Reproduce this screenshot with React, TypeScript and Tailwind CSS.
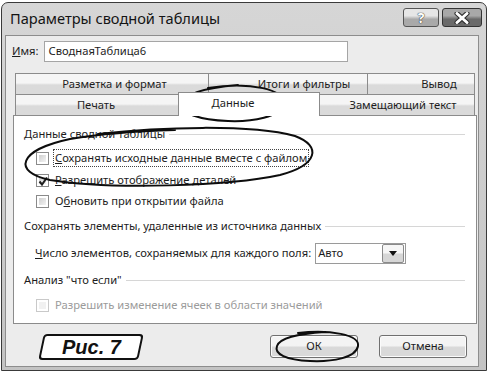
import React from "react";

const row1 = [
  { label: "Разметка и формат", w: "w-[193px]", pad: "pl-[5px]" },
  { label: "Итоги и фильтры", w: "w-[159px]", pad: "pl-[32px]" },
  { label: "Вывод", w: "w-[108px]", pad: "pl-[36px]" },
];

function Box({ checked, disabled }: { checked?: boolean; disabled?: boolean }) {
  return (
    <span
      className={`relative flex w-[13px] h-[13px] shrink-0 border p-[2px] bg-white ${
        disabled ? "border-[#c9c9c9]" : "border-[#8a8a8a]"
      }`}
    >
      <span
        className={`flex-1 ${
          disabled ? "bg-[#f1f1f1]" : "bg-linear-to-br from-[#cfcfcf] to-[#f3f3f3]"
        }`}
      />
      {checked && (
        <svg className="absolute left-0 top-0" width="13" height="13" viewBox="0 0 13 13">
          <path d="M2.5 6.5 L5 9.5 L10 2.5" fill="none" stroke="#1f1f1f" strokeWidth="2" />
        </svg>
      )}
    </span>
  );
}

function Section({ title, gap }: { title: string; gap: string }) {
  return (
    <div className={`flex items-center h-[16px] pr-[11px] ${gap}`}>
      <span className="whitespace-nowrap">{title}</span>
      <span className="flex-1 h-px bg-[#d6d6d6] ml-[4px]" />
    </div>
  );
}

function Check({
  children,
  checked,
  disabled,
  gap,
  focus,
}: {
  children: React.ReactNode;
  checked?: boolean;
  disabled?: boolean;
  gap: string;
  focus?: boolean;
}) {
  return (
    <div className={`flex items-center h-[16px] pl-[12px] gap-[4px] ${gap}`}>
      <Box checked={checked} disabled={disabled} />
      <span
        className={`whitespace-nowrap px-[1px] ${disabled ? "text-[#9b9b9b]" : ""} ${
          focus ? "border border-dotted border-[#444]" : "border border-transparent"
        }`}
      >
        {children}
      </span>
    </div>
  );
}

function Button({ children }: { children: React.ReactNode }) {
  return (
    <div className="w-[88px] h-[23px] rounded-[3px] border border-[#707070] bg-linear-to-b from-[#f4f4f4] from-45% to-[#d9d9d9] to-55% flex items-center justify-center shadow-[inset_0_0_0_1px_#fbfbfb]">
      {children}
    </div>
  );
}

export default function App() {
  return (
    <div className="relative w-[488px] h-[373px] overflow-hidden bg-white text-[11.2px] text-[#1d1d1d] font-['Noto_Sans',sans-serif]">
      <div className="ml-[1px] mt-[2px] w-[486px] h-[369px] border border-[#3a3a3a] rounded-t-[7px] bg-linear-to-b from-[#d6d6d6] to-[#c3c3c3] flex flex-col">
        {/* title bar */}
        <div className="h-[32px] flex items-start pr-[4px]">
          <div className="flex-1 h-full flex items-center pl-[8px] text-[14.6px] text-[#141414]">
            Параметры сводной таблицы
          </div>
          <div className="flex gap-[3px] pt-[5px]">
            <div className="w-[36px] h-[19px] rounded-[3px] border border-[#555] bg-linear-to-b from-[#e6e6e6] from-40% to-[#a9a9a9] to-60% flex items-center justify-center text-[14px] font-bold leading-none text-white [text-shadow:0_0_1px_#222,0_0_1px_#222]">
              ?
            </div>
            <div className="w-[40px] h-[19px] rounded-[3px] border border-[#333] bg-linear-to-b from-[#a8a8a8] from-40% to-[#6a6a6a] to-60% flex items-center justify-center">
              <svg width="16" height="12" viewBox="0 0 16 12">
                <path d="M3 1.5 L13 10.5 M13 1.5 L3 10.5" stroke="#2a2a2a" strokeWidth="5" strokeLinecap="round" />
                <path d="M3 1.5 L13 10.5 M13 1.5 L3 10.5" stroke="#fff" strokeWidth="3" strokeLinecap="round" />
              </svg>
            </div>
          </div>
        </div>

        {/* client area */}
        <div className="flex-1 ml-[3px] mr-[7px] mb-[3px] border border-[#8d8d8d] bg-[#ececec] flex flex-col">
          <div className="flex items-center mt-[5px] pl-[6px] gap-[5px]">
            <span>
              <u>И</u>мя:
            </span>
            <div className="w-[304px] h-[21px] border border-[#a5a5a5] bg-white flex items-center pl-[4px]">
              СводнаяТаблица6
            </div>
          </div>

          {/* tabs */}
          <div className="ml-[9px] mt-[11px] w-[460px]">
            <div className="flex h-[21px]">
              {row1.map((t, i) => (
                <div
                  key={t.label}
                  className={`${t.w} ${t.pad} h-full border-t border-l border-[#8b8b8b] ${
                    i === row1.length - 1 ? "border-r" : ""
                  } bg-linear-to-b from-[#f5f5f5] from-45% to-[#dadada] to-55% flex items-center justify-center`}
                >
                  {t.label}
                </div>
              ))}
            </div>
            <div className="flex h-[21px] items-end">
              <div className="w-[163px] h-full border-t border-l border-[#8b8b8b] bg-linear-to-b from-[#f5f5f5] from-45% to-[#dadada] to-55% flex items-center justify-center pr-[2px]">
                Печать
              </div>
              <div className="relative z-10 w-[142px] h-[24px] -mb-[1px] border-t border-l border-r border-[#8b8b8b] bg-white flex items-center justify-center pr-[32px] pb-[2px]">
                Данные
              </div>
              <div className="w-[155px] h-full border-t border-r border-[#8b8b8b] bg-linear-to-b from-[#f5f5f5] from-45% to-[#dadada] to-55% flex items-center justify-center pl-[12px]">
                Замещающий текст
              </div>
            </div>
          </div>

          {/* panel */}
          <div className="ml-[7px] w-[464px] h-[209px] border border-[#8b8b8b] bg-white pl-[10px] flex flex-col">
            <Section title="Данные сводной таблицы" gap="mt-[10px]" />
            <Check gap="mt-[8px]" focus>
              <u>С</u>охранять исходные данные вместе с файлом
            </Check>
            <Check gap="mt-[6px]" checked>
              <u>Р</u>азрешить отображение деталей
            </Check>
            <Check gap="mt-[5px]">
              О<u>б</u>новить при открытии файла
            </Check>
            <Section title="Сохранять элементы, удаленные из источника данных" gap="mt-[9px]" />
            <div className="flex items-center h-[22px] mt-[8px] pl-[11px] gap-[4px]">
              <span className="whitespace-nowrap">
                <u>Ч</u>исло элементов, сохраняемых для каждого поля:
              </span>
              <div className="w-[91px] h-[21px] border border-[#9a9a9a] bg-white flex items-center">
                <span className="flex-1 pl-[2px]">Авто</span>
                <div className="w-[22px] h-[19px] mr-[1px] border border-[#8a8a8a] rounded-[2px] bg-linear-to-b from-[#f6f6f6] from-45% to-[#d6d6d6] to-55% flex items-center justify-center">
                  <svg width="8" height="5" viewBox="0 0 8 5">
                    <path d="M0 0 H8 L4 5 Z" fill="#111" />
                  </svg>
                </div>
              </div>
            </div>
            <Section title={'Анализ "что если"'} gap="mt-[8px]" />
            <Check gap="mt-[9px]" disabled>
              Разрешить изменение ячеек в области значений
            </Check>
          </div>

          {/* bottom */}
          <div className="flex items-start mt-[10px]">
            <div className="ml-[35px] w-[100px] h-[26px] -skew-x-[12deg] border-2 border-[#111] rounded-[4px] bg-white flex items-center justify-center">
              <span className="skew-x-[12deg] font-['Liberation_Sans',sans-serif] font-bold italic text-[20px] text-[#111] leading-none">
                Рис. 7
              </span>
            </div>
            <div className="ml-auto mr-[11px] mt-[1px] flex gap-[21px]">
              <Button>ОК</Button>
              <Button>Отмена</Button>
            </div>
          </div>
        </div>
      </div>

      {/* hand-drawn marks */}
      <svg className="absolute left-0 top-0 pointer-events-none" width="488" height="373" viewBox="0 0 488 373">
        <g fill="none" stroke="#0d0d0d" strokeWidth="2" strokeLinecap="round">
          <path d="M208 88 C250 81 287 90 284 104 C281 117 252 122 228 121 C200 120 179 113 181 104 C183 94 204 88 238 85" />
          <path d="M98 134 C160 127 250 124 295 136 C322 146 318 165 280 175 C230 186 110 190 50 180 C12 172 18 150 70 139 C100 134 140 131 175 130" />
          <path d="M298 333 C330 329 360 335 358 346 C356 358 332 362 310 361 C286 360 274 354 277 346 C280 338 296 334 325 332" />
        </g>
      </svg>
    </div>
  );
}
